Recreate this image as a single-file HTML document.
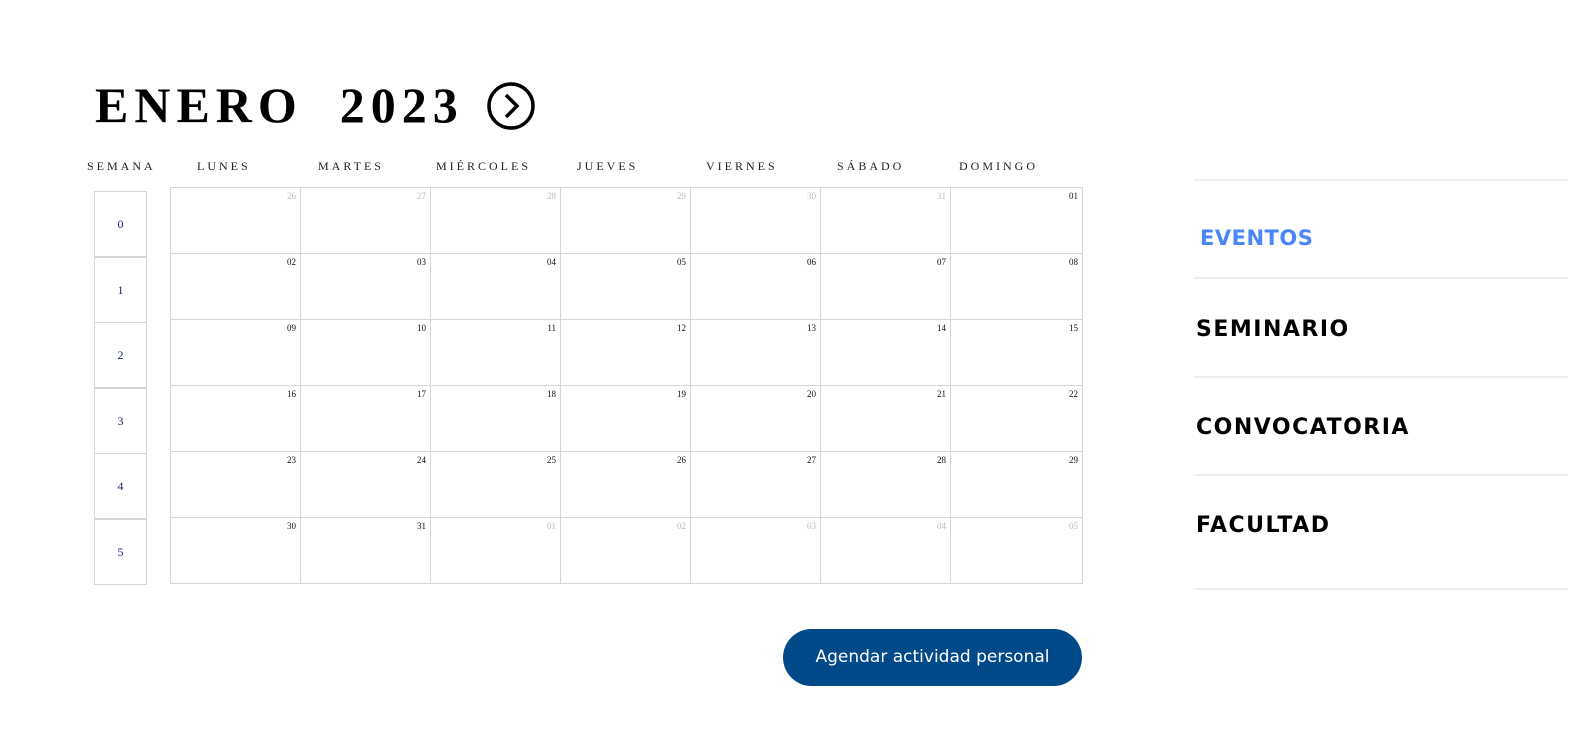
<!DOCTYPE html>
<html><head><meta charset="utf-8"><style>
body{margin:0;width:1594px;height:737px;background:#fff;position:relative;overflow:hidden;font-family:"Liberation Serif",serif}
.a{position:absolute}
.t{left:95px;top:75px;font-size:50px;font-weight:bold;letter-spacing:6px;line-height:60px}
.h{top:159px;font-size:12px;letter-spacing:3px;color:#222}
.c{border:1px solid #d6d6d6;box-sizing:border-box}
.n{position:absolute;right:4px;top:3px;font-size:9px;color:#111}
.g{color:#bbb}
.w{font-size:12px;color:#1a2a66;text-align:center;line-height:65px}
.s{left:1194px;width:374px;border-top:2px solid #eee}
.m{left:1196px;font-family:"DejaVu Sans","Liberation Sans",sans-serif;font-weight:bold;font-size:22px;letter-spacing:1.5px}
</style></head><body>
<div class="a t">ENERO&nbsp; 2023</div>
<svg class="a" style="left:486px;top:81px" width="50" height="50" viewBox="0 0 50 50"><circle cx="25" cy="25" r="22" fill="none" stroke="#000" stroke-width="3.5"/><path d="M20 14 L31 25 L20 36" fill="none" stroke="#000" stroke-width="3.5"/></svg>
<div class="a h" style="left:87px">SEMANA</div>
<div class="a h" style="left:197px">LUNES</div>
<div class="a h" style="left:318px">MARTES</div>
<div class="a h" style="left:436px">MIÉRCOLES</div>
<div class="a h" style="left:577px">JUEVES</div>
<div class="a h" style="left:706px">VIERNES</div>
<div class="a h" style="left:837px">SÁBADO</div>
<div class="a h" style="left:959px">DOMINGO</div>
<div id="g"></div>
<script>
var d=[[26,27,28,29,30,31,1],[2,3,4,5,6,7,8],[9,10,11,12,13,14,15],[16,17,18,19,20,21,22],[23,24,25,26,27,28,29],[30,31,1,2,3,4,5]];
var h='',xs=[170,300,430,560,690,820,950,1082];
for(var r=0;r<6;r++){var y=187+r*66;
h+='<div class="a c w" style="left:94px;top:'+(191+r*65.5)+'px;width:53px;height:66px">'+r+'</div>';
for(var c=0;c<7;c++){var v=d[r][c],g=(r==0&&c<6)||(r==5&&c>1);
h+='<div class="a c" style="left:'+xs[c]+'px;top:'+y+'px;width:'+(xs[c+1]-xs[c]+1)+'px;height:67px"><span class="n'+(g?' g':'')+'">'+(v<10?'0'+v:v)+'</span></div>';}}
document.getElementById('g').innerHTML=h;
</script>
<div class="a s" style="top:179px"></div>
<div class="a s" style="top:277px"></div>
<div class="a s" style="top:376px"></div>
<div class="a s" style="top:474px"></div>
<div class="a s" style="top:588px"></div>
<div class="a m" style="left:1200px;top:226px;color:#4a86f5;font-size:21px;letter-spacing:0.5px">EVENTOS</div>
<div class="a m" style="top:317px">SEMINARIO</div>
<div class="a m" style="top:415px">CONVOCATORIA</div>
<div class="a m" style="top:513px">FACULTAD</div>
<div class="a" style="left:783px;top:629px;width:299px;height:57px;border-radius:29px;background:#004a8a;color:#fff;font-family:'DejaVu Sans','Liberation Sans',sans-serif;font-size:17px;text-align:center;line-height:57px">Agendar actividad personal</div>
</body></html>
